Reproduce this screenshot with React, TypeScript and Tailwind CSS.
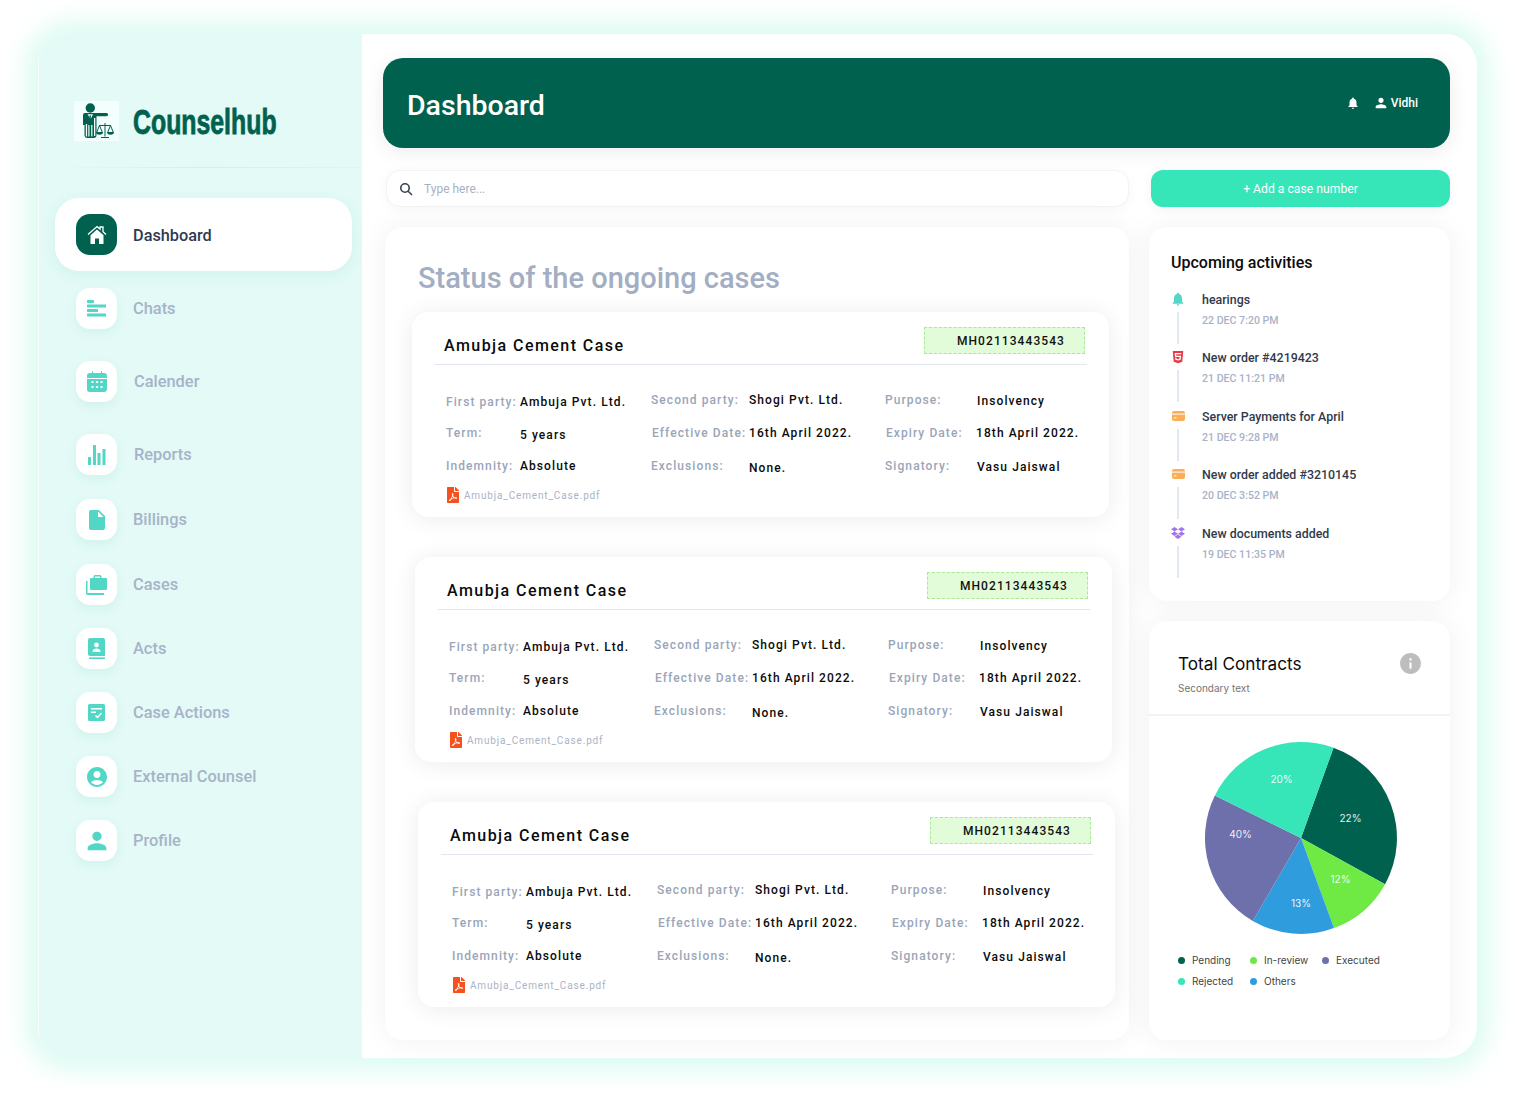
import { FaDropbox, FaFilePdf, FaHtml5 } from 'react-icons/fa'
import { MdAccountCircle, MdInfo, MdInsertDriveFile, MdNotifications, MdPerson } from 'react-icons/md'

const HomeIcon = () => (
  <svg width="20" height="19" viewBox="0 0 20 19" fill="none">
    <path d="M1 9.500L10 1.500l3 2.600V2h3v4.700l3 2.800" stroke="#fff" strokeWidth="1.300" />
    <path d="M10 4.500l6.500 5.700V19h-4.500v-5.500H8V19H3.500v-8.800z" fill="#fff" />
  </svg>
)

const ChatBars = () => (
  <svg width="19" height="17" viewBox="0 0 19 17" fill="currentColor">
    <rect width="7" height="3" rx="0.5" />
    <rect y="4.5" width="19" height="3" rx="0.5" />
    <rect y="9" width="11" height="3" rx="0.5" />
    <rect y="13.5" width="19" height="3" rx="0.5" />
  </svg>
)

const CalendarIcon = () => (
  <svg width="20" height="21" viewBox="0 0 20 21" fill="currentColor">
    <path d="M5 0h1v2h8V0h1v2h2a3 3 0 0 1 3 3v2H0V5a3 3 0 0 1 3-3h2zM0 8h20v10a3 3 0 0 1-3 3H3a3 3 0 0 1-3-3z" />
    <g fill="#fff">
      <rect x="4.5" y="10" width="2" height="2" />
      <rect x="9" y="10" width="2" height="2" />
      <rect x="13.5" y="10" width="2" height="2" />
      <rect x="4.5" y="15" width="2" height="2" />
      <rect x="9" y="15" width="2" height="2" />
      <rect x="13.5" y="15" width="2" height="2" />
    </g>
  </svg>
)

const ReportBars = () => (
  <svg width="18" height="20" viewBox="0 0 18 20" fill="currentColor">
    <rect y="12" width="3" height="8" rx="0.5" />
    <rect x="5" width="3" height="20" rx="0.5" />
    <rect x="9.5" y="8" width="3" height="12" rx="0.5" />
    <rect x="14.5" y="4" width="3" height="16" rx="0.5" />
  </svg>
)

const CasesIcon = () => (
  <svg width="21" height="20" viewBox="0 0 21 20" fill="currentColor">
    <path d="M7.500 3V1.500A1.500 1.500 0 0 1 9 0h5a1.500 1.500 0 0 1 1.500 1.500V3H20a1 1 0 0 1 1 1v10a1 1 0 0 1-1 1H5a1 1 0 0 1-1-1V4a1 1 0 0 1 1-1zM9 3h5V1.500H9z" fillRule="evenodd" />
    <path d="M0 6h1.500v12H18v2H2a2 2 0 0 1-2-2z" />
  </svg>
)

const ActsIcon = () => (
  <svg width="17" height="21" viewBox="0 0 17 21" fill="currentColor">
    <path d="M2 0h13a2 2 0 0 1 2 2v16H2a2 2 0 0 1-2-2V2a2 2 0 0 1 2-2z" />
    <rect x="1" y="19.4" width="16" height="1.6" />
    <circle cx="8.5" cy="7" r="2.4" fill="#fff" />
    <path d="M4.5 13.5c0-2 2-3 4-3s4 1 4 3v.5h-8z" fill="#fff" />
  </svg>
)

const CaseActionsIcon = () => (
  <svg width="17" height="17" viewBox="0 0 17 17" fill="currentColor">
    <rect width="17" height="17" rx="1.5" />
    <rect x="3" y="4" width="11" height="1.5" fill="#fff" />
    <rect x="3" y="7.5" width="5" height="1.5" fill="#fff" />
    <path d="M7.5 11.5l2 2 4-4.5" fill="none" stroke="#fff" strokeWidth="1.5" />
  </svg>
)

const CardIcon = () => (
  <svg width="13" height="10" viewBox="0 0 13 10" fill="#fbae57">
    <rect width="13" height="10" rx="2" />
    <rect y="2.600" width="13" height="1" fill="#fff" />
    <rect x="2" y="6.400" width="2.500" height="1" fill="#fff" />
  </svg>
)

const LogoIcon = () => (
  <svg width="45" height="40" viewBox="0 0 45 40">
    <rect width="45" height="40" fill="#f3fffd" />
    <g fill="#01614f">
      <circle cx="16.3" cy="7" r="4.700" />
      <path d="M9 14a2 2 0 0 1 2-2h21.500a.6.6 0 0 1 0 3.200H22.500V34a3 3 0 0 1-3 3h-6a3 3 0 0 1-3-3V24H9z" />
    </g>
    <g fill="#f3fffd">
      <rect x="11.800" y="23" width="1.300" height="12.500" />
      <rect x="20" y="17" width="1.300" height="18" />
      <path d="M13.500 13.300h5.500l-2 4.200-.8-.1z" />
      <rect x="14.300" y="24" width="1.200" height="11.500" />
      <rect x="17.200" y="24" width="1.200" height="11.500" />
    </g>
    <path d="M15.400 14.500h1.600l-.3 3 .6 6-1.200 1.300-1.100-1.300.6-6z" fill="#01614f" />
    {/* scales */}
    <g stroke="#01614f" strokeWidth="1" fill="none">
      <path d="M31 22v13.500M27 36.500h8M25 24.500h12" />
      <path d="M25.500 24.500l-2.700 6.500M25.500 24.500l2.700 6.500M36.500 24.500l-2.700 6.500M36.500 24.500l2.700 6.500" />
    </g>
    <path d="M22 31h7a3.500 2.800 0 0 1-7 0zM33 31h7a3.500 2.800 0 0 1-7 0z" fill="#01614f" />
  </svg>
)

const NAV = [
  { name: 'Chats', icon: <ChatBars />, gap: 'mt-[17px]', text: 'ml-[16px]' },
  { name: 'Calender', icon: <CalendarIcon />, gap: 'mt-[32px]', text: 'ml-[17px]' },
  { name: 'Reports', icon: <ReportBars />, gap: 'mt-[32px]', text: 'ml-[17px]' },
  { name: 'Billings', icon: <MdInsertDriveFile className="h-[24px] w-[24px]" />, gap: 'mt-[24px]', text: 'ml-[16px]' },
  { name: 'Cases', icon: <CasesIcon />, gap: 'mt-[24px]', text: 'ml-[16px]' },
  { name: 'Acts', icon: <ActsIcon />, gap: 'mt-[23px]', text: 'ml-[16px]' },
  { name: 'Case Actions', icon: <CaseActionsIcon />, gap: 'mt-[23px]', text: 'ml-[16px]' },
  { name: 'External Counsel', icon: <MdAccountCircle className="h-[24px] w-[24px]" />, gap: 'mt-[23px]', text: 'ml-[16px]' },
  { name: 'Profile', icon: <MdPerson className="h-[28px] w-[28px]" />, gap: 'mt-[23px]', text: 'ml-[16px]' },
]

const COLUMNS = [
  {
    width: 'w-[205px]',
    labelWidth: 'w-[74px]',
    fields: [
      { label: 'First party:', value: 'Ambuja Pvt. Ltd.' },
      { label: 'Term:', value: '5 years', valueClass: 'mt-[4px]' },
      { label: 'Indemnity:', value: 'Absolute' },
    ],
  },
  {
    width: 'w-[234px]',
    labelWidth: 'w-[98px]',
    fields: [
      { label: 'Second party:', value: 'Shogi Pvt. Ltd.', labelClass: 'mb-[4px]', valueClass: 'mb-[4px]' },
      { label: 'Effective Date:', value: '16th April 2022.', labelClass: 'ml-px', valueClass: '-ml-px' },
      { label: 'Exclusions:', value: 'None.', valueClass: 'mt-[4px]' },
    ],
  },
  {
    width: 'w-[200px]',
    labelWidth: 'w-[92px]',
    fields: [
      { label: 'Purpose:', value: 'Insolvency', labelClass: 'mb-[4px]', valueClass: 'mb-[2px]' },
      { label: 'Expiry Date:', value: '18th April 2022.', labelClass: 'ml-px', valueClass: '-ml-[2px]' },
      { label: 'Signatory:', value: 'Vasu Jaiswal', valueClass: 'mt-[2px]' },
    ],
  },
]

const ACTIVITIES = [
  { title: 'hearings', date: '22 DEC 7:20 PM', icon: <MdNotifications className="h-[16px] w-[16px] text-[#52d6c6]" /> },
  { title: 'New order #4219423', date: '21 DEC 11:21 PM', icon: <FaHtml5 className="h-[14px] w-[14px] text-[#e8394a]" /> },
  { title: 'Server Payments for April', date: '21 DEC 9:28 PM', icon: <CardIcon /> },
  { title: 'New order added #3210145', date: '20 DEC 3:52 PM', icon: <CardIcon /> },
  { title: 'New documents added', date: '19 DEC 11:35 PM', icon: <FaDropbox className="h-[14px] w-[14px] text-[#a076e8]" /> },
]

const LEGEND = [
  { name: 'Pending', dot: 'bg-[#01614f]' },
  { name: 'In-review', dot: 'bg-[#6fe944]' },
  { name: 'Executed', dot: 'bg-[#6d70ab]' },
  { name: 'Rejected', dot: 'bg-[#36e6b8]' },
  { name: 'Others', dot: 'bg-[#2f9cdd]' },
]

const SLICES = [
  { d: 'M0 0L32.5 -90.3A96 96 0 0 1 84.1 46.2Z', fill: '#01614f' },
  { d: 'M0 0L84.1 46.2A96 96 0 0 1 33 90.1Z', fill: '#6fe944' },
  { d: 'M0 0L33 90.1A96 96 0 0 1 -48.2 83Z', fill: '#2f9cdd' },
  { d: 'M0 0L-48.2 83A96 96 0 0 1 -86.1 -42.5Z', fill: '#6d70ab' },
  { d: 'M0 0L-86.1 -42.5A96 96 0 0 1 32.5 -90.3Z', fill: '#36e6b8' },
]

const PIE_LABELS = [
  { text: '20%', x: -19.500, y: -58.700 },
  { text: '22%', x: 49.500, y: -19.700 },
  { text: '40%', x: -60.500, y: -3.700 },
  { text: '12%', x: 39.500, y: 41.300 },
  { text: '13%', x: 0, y: 65.300 },
]

function CaseCard({ offset, gap }: { offset: string; gap: string }) {
  return (
    <div className={`${offset} ${gap} h-[205px] w-[697px] rounded-[16px] bg-white shadow-[0_2px_24px_rgba(0,0,0,0.08)]`}>
      <div className="ml-[23px] flex h-[53px] w-[652px] justify-between border-b border-[#e2e6f0] pt-[15px]">
        <p className="ml-[9px] mt-[9px] text-[16px] leading-[20px] font-medium tracking-[0.09em] text-[#0b0b0b]">Amubja Cement Case</p>
        <div className="mr-[2px] flex h-[27px] w-[161px] items-center justify-end border border-dashed border-[#a6eb96] bg-[#e2fbd8] pr-[19px] text-[12px] font-medium tracking-[0.09em] text-[#111]">
          MH02113443543
        </div>
      </div>
      <div className="ml-[34px] mt-[21px] flex">
        {COLUMNS.map((col) => (
          <div key={col.width} className={col.width}>
            {col.fields.map((f) => (
              <div key={f.label} className="flex h-[32px] items-center text-[12px] font-medium tracking-[0.09em] whitespace-nowrap first:h-[31px] last:h-[34px]">
                <span className={`${col.labelWidth} shrink-0 text-[#9aa5b8] ${f.labelClass ?? ''}`}>{f.label}</span>
                <span className={`text-[#0b0b0b] ${f.valueClass ?? ''}`}>{f.value}</span>
              </div>
            ))}
          </div>
        ))}
      </div>
      <div className="ml-[35px] mt-[4px] flex items-center gap-[5px]">
        <FaFilePdf className="h-[16px] w-[12px] text-[#f4511e]" />
        <span className="text-[10px] tracking-[0.085em] text-[#aab3c5]">Amubja_Cement_Case.pdf</span>
      </div>
    </div>
  )
}

export default function App() {
  return (
    <div className="h-[1099px] w-[1515px] overflow-hidden bg-white pl-[38px] pt-[34px] font-[Roboto]">
      <div className="flex h-[1024px] w-[1439px] rounded-[32px] bg-white shadow-[0_0_26px_12px_#dcfbf2]">
        {/* Sidebar */}
        <aside className="relative h-full w-[324px] shrink-0 rounded-l-[32px] bg-[#e3faf6] pt-[67px]">
          <div className="absolute bottom-[23px] left-0 top-[24px] w-px bg-white/70" />
          <div className="ml-[36px] flex h-[40px] items-center">
            <LogoIcon />
            <span className="ml-[14px] mt-[2px] origin-left scale-x-[0.71] font-['Liberation_Sans'] text-[35px] font-bold whitespace-nowrap text-[#01614f] [-webkit-text-stroke:0.8px_#01614f]">
              Counselhub
            </span>
          </div>
          <div className="ml-[12px] mt-[26px] h-px bg-gradient-to-r from-transparent via-[#dcebe7] to-[#e3f3ef]" />
          <nav className="ml-[17px] mt-[30px] w-[297px]">
            <div className="flex h-[73px] items-center rounded-[24px] bg-white pl-[21px] shadow-[0_4px_14px_rgba(70,180,160,0.1)]">
              <div className="flex h-[41px] w-[41px] items-center justify-center rounded-[14px] bg-[#01614f]">
                <HomeIcon />
              </div>
              <span className="ml-[16px] mt-[4px] text-[16.3px] font-medium text-[#2f3a52]">Dashboard</span>
            </div>
            {NAV.map((item) => (
              <div key={item.name} className={`${item.gap} flex h-[41px] items-center pl-[21px]`}>
                <div className="flex h-[41px] w-[41px] items-center justify-center rounded-[14px] bg-white text-[#52d6c6] shadow-[0_4px_10px_rgba(70,180,160,0.1)]">
                  {item.icon}
                </div>
                <span className={`${item.text} mt-[2px] text-[16.4px] font-medium text-[#a7b3c9]`}>{item.name}</span>
              </div>
            ))}
          </nav>
        </aside>

        {/* Main */}
        <main className="flex-1 pl-[21px] pt-[24px]">
          <header className="flex h-[90px] w-[1067px] items-center justify-between rounded-[20px] bg-[#01614f] pl-[24px] pr-[32px] shadow-[0_4px_20px_rgba(0,0,0,0.08)]">
            <h1 className="mt-[7px] text-[28.5px] font-medium text-white">Dashboard</h1>
            <div className="flex items-center text-white">
              <MdNotifications className="h-[14px] w-[14px]" />
              <MdPerson className="ml-[13px] h-[16px] w-[16px]" />
              <span className="ml-[2px] text-[12px] font-medium">Vidhi</span>
            </div>
          </header>

          <div className="mt-[22px] flex gap-[22px]">
            <div className="ml-[3px] flex h-[37px] w-[743px] items-center rounded-[14px] border border-[#f3f3f3] bg-white pl-[12px] shadow-[0_2px_12px_rgba(0,0,0,0.04)]">
              <svg width="14" height="14" viewBox="0 0 14 14" fill="none" stroke="#36404f" strokeWidth="1.600">
                <circle cx="6" cy="6" r="4.200" />
                <path d="M9.200 9.200L13 13" />
              </svg>
              <span className="ml-[11px] text-[12px] text-[#a9b1bf]">Type here...</span>
            </div>
            <div className="flex h-[37px] w-[299px] items-center justify-center rounded-[12px] bg-[#36e6b8] pt-[2px] text-[12.2px] font-normal text-white shadow-[0_2px_12px_rgba(0,0,0,0.05)]">
              + Add a case number
            </div>
          </div>

          <div className="mt-[20px] flex">
            <section className="ml-[2px] h-[813px] w-[744px] rounded-[18px] bg-white shadow-[0_0_30px_rgba(0,0,0,0.06)]">
              <div className="h-[85px] pl-[33px] pt-[33px]">
                <h2 className="text-[29px] leading-[36px] font-medium text-[#a3aec2]">Status of the ongoing cases</h2>
              </div>
              <CaseCard offset="ml-[27px]" gap="mt-0" />
              <CaseCard offset="ml-[30px]" gap="mt-[40px]" />
              <CaseCard offset="ml-[33px]" gap="mt-[40px]" />
            </section>

            <div className="ml-[20px] w-[301px]">
              <section className="h-[374px] rounded-[18px] bg-white pl-[22px] pt-[26px] shadow-[0_0_30px_rgba(0,0,0,0.06)]">
                <h3 className="mb-[18px] text-[16px] leading-[20px] font-medium text-[#0b0b0b]">Upcoming activities</h3>
                {ACTIVITIES.map((a) => (
                  <div key={a.title} className="flex h-[58.400px]">
                    <div className="flex w-[14px] flex-col items-center">
                      <div className="mt-px flex h-[14px] items-center justify-center">{a.icon}</div>
                      <div className="mt-[6px] h-[32px] w-[2px] bg-[#e1e7f3]" />
                    </div>
                    <div className="ml-[17px] mt-px">
                      <p className="text-[12.4px] leading-[16px] font-medium text-[#303a4c]">{a.title}</p>
                      <p className="mt-[6px] text-[10.6px] leading-[14px] font-medium text-[#a7b3c8]">{a.date}</p>
                    </div>
                  </div>
                ))}
              </section>

              <section className="mt-[20px] h-[419px] rounded-[18px] bg-white font-[Inter] shadow-[0_0_30px_rgba(0,0,0,0.06)]">
                <div className="flex h-[95px] items-start justify-between border-b-2 border-[#f2f2f2] pl-[29px] pr-[27px] pt-[31px]">
                  <div>
                    <p className="text-[17.2px] leading-[23px] font-normal text-[#0b0b0b]">Total Contracts</p>
                    <p className="mt-[6px] text-[10px] leading-[14px] text-[#757575]">Secondary text</p>
                  </div>
                  <MdInfo className="mt-[-1px] h-[25px] w-[25px] text-[#bdbdbd]" />
                </div>
                <svg width="192" height="192" viewBox="-96 -96 192 192" className="ml-[55.500px] mt-[26px]">
                  {SLICES.map((s) => (
                    <path key={s.fill} d={s.d} fill={s.fill} />
                  ))}
                  {PIE_LABELS.map((l) => (
                    <text key={l.text} x={l.x} y={l.y} textAnchor="middle" dominantBaseline="central" fontSize="10" fill="#ffffff" opacity="0.9">
                      {l.text}
                    </text>
                  ))}
                </svg>
                <div className="ml-[29px] mt-[19px] grid w-[216px] grid-cols-3 gap-y-[7px]">
                  {LEGEND.map((l) => (
                    <div key={l.name} className="flex h-[14px] items-center">
                      <span className={`h-[7px] w-[7px] rounded-full ${l.dot}`} />
                      <span className="ml-[7px] text-[10px] text-[#444]">{l.name}</span>
                    </div>
                  ))}
                </div>
              </section>
            </div>
          </div>
        </main>
      </div>
    </div>
  )
}
